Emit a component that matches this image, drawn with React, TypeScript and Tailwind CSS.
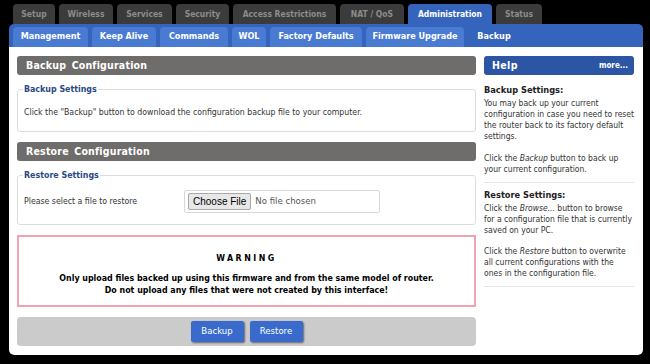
import React from "react";

const font = { fontFamily: '"DejaVu Sans Condensed", "DejaVu Sans", sans-serif' };

const topTabs: { label: string; w: string; active?: boolean }[] = [
  { label: "Setup", w: "w-[42px]" },
  { label: "Wireless", w: "w-[54px]" },
  { label: "Services", w: "w-[55px]" },
  { label: "Security", w: "w-[53px]" },
  { label: "Access Restrictions", w: "w-[103px]" },
  { label: "NAT / QoS", w: "w-[64px]" },
  { label: "Administration", w: "w-[84px]", active: true },
  { label: "Status", w: "w-[46px]" },
];

const subTabs: { label: string; w: string; active?: boolean }[] = [
  { label: "Management", w: "w-[75px]" },
  { label: "Keep Alive", w: "w-[64px]" },
  { label: "Commands", w: "w-[68px]" },
  { label: "WOL", w: "w-[34px]" },
  { label: "Factory Defaults", w: "w-[92px]" },
  { label: "Firmware Upgrade", w: "w-[98px]" },
  { label: "Backup", w: "w-[52px]", active: true },
];

function SectionHeader({ title }: { title: string }) {
  return (
    <div className="h-[19px] rounded-[3px] bg-[#6f6d6b] flex items-center pl-[9px] text-white font-bold text-[10.5px] tracking-[0.2px] [word-spacing:2px]">
      {title}
    </div>
  );
}

function Fieldset({ legend, children, h }: { legend: string; children: React.ReactNode; h: string }) {
  return (
    <fieldset className={`border border-[#dcdcdc] rounded-[3px] px-[6px] ${h}`}>
      <legend className="text-[#2b4a86] font-bold text-[8.8px] leading-[12px] px-[1px] -ml-[1px]">{legend}</legend>
      {children}
    </fieldset>
  );
}

function Lines({ lines }: { lines: React.ReactNode[] }) {
  return (
    <div className="whitespace-nowrap">
      {lines.map((l, i) => (
        <div key={i}>{l}</div>
      ))}
    </div>
  );
}

export default function App() {
  return (
    <div className="w-[650px] h-[364px] bg-black overflow-hidden text-[8.7px] text-[#333]" style={font}>
      <div className="flex gap-[4px] pl-[13px] pt-[4px]">
        {topTabs.map((t) => (
          <div
            key={t.label}
            className={`${t.w} h-[20px] rounded-t-[4px] flex items-center justify-center font-bold text-[8.5px] ${
              t.active ? "bg-[#3464bc] text-white" : "bg-[#3b3b3b] text-[#8c8c8c]"
            }`}
          >
            {t.label}
          </div>
        ))}
      </div>
      <div className="mx-[9px] w-[634px] h-[331px] rounded-[5px] bg-[#3464bc] flex flex-col overflow-hidden">
        <div className="flex gap-[4px] pl-[4px] pt-[3px] h-[23px]">
          {subTabs.map((t) => (
            <div
              key={t.label}
              className={`${t.w} h-[20px] rounded-t-[4px] flex items-center justify-center font-bold text-[9px] text-white ${
                t.active ? "bg-[#3464bc]" : "bg-[#4a7bd2]"
              }`}
            >
              {t.label}
            </div>
          ))}
        </div>
        <div className="flex-1 bg-white rounded-b-[5px] flex gap-[8px] pl-[8px] pr-[9px] pt-[9px]">
          <div className="w-[459px] shrink-0 flex flex-col">
            <SectionHeader title="Backup Configuration" />
            <div className="mt-[8px]">
              <Fieldset legend="Backup Settings" h="h-[49px]">
                <div className="pt-[11px]">
                  Click the "Backup" button to download the configuration backup file to your computer.
                </div>
              </Fieldset>
            </div>
            <div className="mt-[10px]">
              <SectionHeader title="Restore Configuration" />
            </div>
            <div className="mt-[8px]">
              <Fieldset legend="Restore Settings" h="h-[56px]">
                <div className="flex items-start pt-[9px]">
                  <div className="w-[160px] pt-[5px]">Please select a file to restore</div>
                  <div className="w-[196px] h-[23px] border border-[#d8d8d8] rounded-[2px] flex items-center pl-[3px] gap-[4px]">
                    <div
                      className="h-[17px] px-[4px] border border-[#a9a9a9] bg-[#e8e8e8] rounded-[2px] flex items-center text-[10px] text-black"
                      style={{ fontFamily: '"Liberation Sans", Arial, sans-serif' }}
                    >
                      Choose File
                    </div>
                    <span className="text-[9.5px] text-[#555]">No file chosen</span>
                  </div>
                </div>
              </Fieldset>
            </div>
            <div className="mt-[10px] h-[72px] border-2 border-[#f2a3b3] flex flex-col items-center text-black font-bold">
              <div className="mt-[15px] tracking-[2.5px] text-[8.8px]">WARNING</div>
              <div className="mt-[7px] leading-[12px] text-center text-[8.8px]">
                Only upload files backed up using this firmware and from the same model of router.
                <br />
                Do not upload any files that were not created by this interface!
              </div>
            </div>
            <div className="mt-[10px] h-[29px] rounded-[4px] bg-[#cbcbcb] flex items-center justify-center gap-[6px]">
              <div className="w-[53px] h-[21px] rounded-[2px] bg-[#3a6bcc] text-white flex items-center justify-center text-[9.5px] shadow-[1px_1px_2px_rgba(0,0,0,0.5)]">
                Backup
              </div>
              <div className="w-[53px] h-[21px] rounded-[2px] bg-[#3a6bcc] text-white flex items-center justify-center text-[9.5px] shadow-[1px_1px_2px_rgba(0,0,0,0.5)]">
                Restore
              </div>
            </div>
          </div>
          <div className="w-[150px] shrink-0 flex flex-col">
            <div className="h-[19px] rounded-[3px] bg-[#2c55a3] flex items-center justify-between pl-[8px] pr-[6px] text-white font-bold">
              <span className="text-[10.5px] tracking-[0.4px]">Help</span>
              <span className="text-[8px]">more...</span>
            </div>
            <div className="leading-[11px] mt-[9px] text-[8.5px]">
              <div className="font-bold text-[9.2px] text-[#222]">Backup Settings:</div>
              <div className="mt-[3px]">
                <Lines
                  lines={[
                    "You may back up your current",
                    "configuration in case you need to reset",
                    "the router back to its factory default",
                    "settings.",
                  ]}
                />
              </div>
              <div className="mt-[11px]">
                <Lines
                  lines={[
                    <>
                      Click the <i>Backup</i> button to back up
                    </>,
                    "your current configuration.",
                  ]}
                />
              </div>
              <div className="mt-[7px] border-t border-[#e6e6e6]" />
              <div className="mt-[6px] font-bold text-[9.2px] text-[#222]">Restore Settings:</div>
              <div className="mt-[3px]">
                <Lines
                  lines={[
                    <>
                      Click the <i>Browse...</i> button to browse
                    </>,
                    "for a configuration file that is currently",
                    "saved on your PC.",
                  ]}
                />
              </div>
              <div className="mt-[10px]">
                <Lines
                  lines={[
                    <>
                      Click the <i>Restore</i> button to overwrite
                    </>,
                    "all current configurations with the",
                    "ones in the configuration file.",
                  ]}
                />
              </div>
              <div className="mt-[7px] border-t border-[#e6e6e6]" />
            </div>
          </div>
        </div>
      </div>
    </div>
  );
}
